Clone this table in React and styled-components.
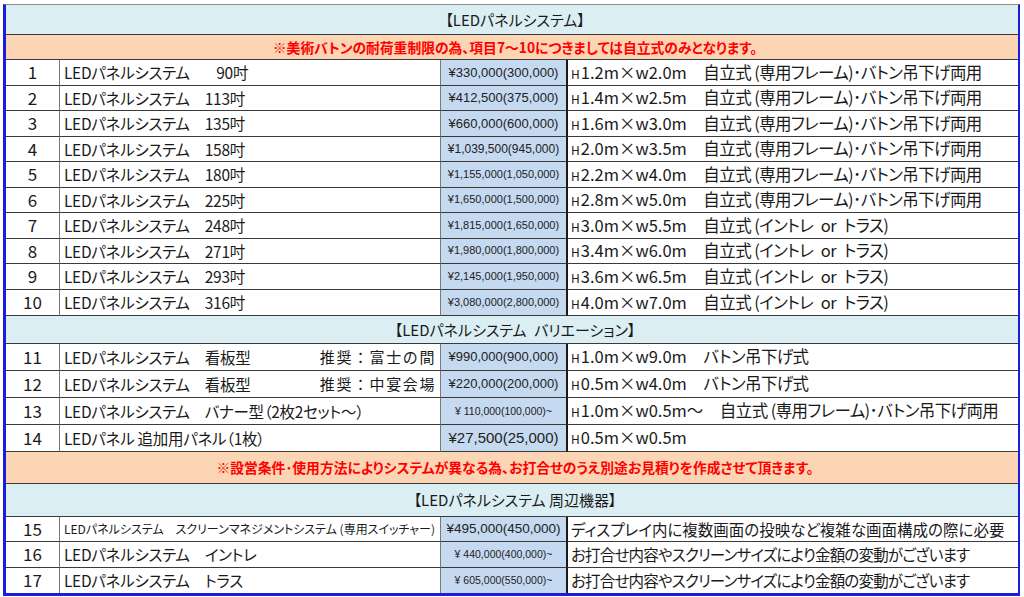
import styled, { createGlobalStyle } from "styled-components";

const GlobalStyle = createGlobalStyle`
  html, body {
    margin: 0;
    padding: 0;
    background: #ffffff;
  }
  body {
    font-family: "Noto Sans CJK JP", "Noto Sans", sans-serif;
    color: #1a1a1a;
  }
`;

const FRAME = "自立式 (専用フレーム)･バトン吊下げ両用";
const TOWER = "自立式 (イントレ\u2002or\u2002トラス)";
const GAP = "\u3000";

const systemRows = [
  { no: 1, rh: 26, size: "\u2007 90吋", price: "¥330,000(300,000)", ps: 13, h: "1.2m×w2.0m", note: FRAME },
  { no: 2, rh: 25, size: "113吋", price: "¥412,500(375,000)", ps: 13, h: "1.4m×w2.5m", note: FRAME },
  { no: 3, rh: 26, size: "135吋", price: "¥660,000(600,000)", ps: 13, h: "1.6m×w3.0m", note: FRAME },
  { no: 4, rh: 25, size: "158吋", price: "¥1,039,500(945,000)", ps: 12, h: "2.0m×w3.5m", note: FRAME },
  { no: 5, rh: 26, size: "180吋", price: "¥1,155,000(1,050,000)", ps: 11, h: "2.2m×w4.0m", note: FRAME },
  { no: 6, rh: 25, size: "225吋", price: "¥1,650,000(1,500,000)", ps: 11, h: "2.8m×w5.0m", note: FRAME },
  { no: 7, rh: 26, size: "248吋", price: "¥1,815,000(1,650,000)", ps: 11, h: "3.0m×w5.5m", note: TOWER },
  { no: 8, rh: 25, size: "271吋", price: "¥1,980,000(1,800,000)", ps: 11, h: "3.4m×w6.0m", note: TOWER },
  { no: 9, rh: 26, size: "293吋", price: "¥2,145,000(1,950,000)", ps: 11, h: "3.6m×w6.5m", note: TOWER },
  { no: 10, rh: 26, size: "316吋", price: "¥3,080,000(2,800,000)", ps: 11, h: "4.0m×w7.0m", note: TOWER },
];

const variationRows = [
  { no: 11, name: "LEDパネルシステム　看板型", tag: "推奨：富士の間", price: "¥990,000(900,000)", ps: 13, h: "1.0m×w9.0m", note: "バトン吊下げ式" },
  { no: 12, name: "LEDパネルシステム　看板型", tag: "推奨：中宴会場", price: "¥220,000(200,000)", ps: 13, h: "0.5m×w4.0m", note: "バトン吊下げ式" },
  { no: 13, name: "LEDパネルシステム　バナー型（2枚2セット～）", price: "¥ 110,000(100,000)~", ps: 10.5, h: "1.0m×w0.5m～", note: FRAME },
  { no: 14, name: "LEDパネル 追加用パネル（1枚）", price: "¥27,500(25,000)", ps: 15, h: "0.5m×w0.5m", note: "" },
];

const optionRows = [
  { no: 15, rh: 25, name: "LEDパネルシステム　スクリーンマネジメントシステム (専用スイッチャー)", small: true, price: "¥495,000(450,000)", ps: 13.5, text: "ディスプレイ内に複数画面の投映など複雑な画面構成の際に必要" },
  { no: 16, rh: 26, name: "LEDパネルシステム　イントレ", price: "¥ 440,000(400,000)~", ps: 10.5, tight: true, text: "お打合せ内容やスクリーンサイズにより金額の変動がございます" },
  { no: 17, rh: 25, name: "LEDパネルシステム　トラス", price: "¥ 605,000(550,000)~", ps: 10.5, tight: true, text: "お打合せ内容やスクリーンサイズにより金額の変動がございます" },
];

const App = () => {
  return (
    <>
      <GlobalStyle />
      <Frame>
        <Sheet>
          <colgroup>
            <col style={{ width: 54 }} />
            <col style={{ width: 381 }} />
            <col style={{ width: 127 }} />
            <col style={{ width: 450 }} />
          </colgroup>
          <tbody>
            <Row $h={30}>
              <Banner colSpan={4} $tone="blue">【LEDパネルシステム】</Banner>
            </Row>
            <Row $h={25}>
              <Banner colSpan={4} $tone="orange">
                ※美術バトンの耐荷重制限の為、項目7～10につきましては自立式のみとなります。
              </Banner>
            </Row>
            {systemRows.map((r) => (
              <Row key={r.no} $h={r.rh}>
                <NumCell>{r.no}</NumCell>
                <NameCell>{`LEDパネルシステム${GAP}${r.size}`}</NameCell>
                <PriceCell $size={r.ps}>{r.price}</PriceCell>
                <DescCell>
                  <HMark>H</HMark>
                  {r.h + GAP}
                  <Note>{r.note}</Note>
                </DescCell>
              </Row>
            ))}
            <Row $h={28}>
              <Banner colSpan={4} $tone="blue">{"【LEDパネルシステム\u2002バリエーション】"}</Banner>
            </Row>
            {variationRows.map((r) => (
              <Row key={r.no} $h={27}>
                <NumCell>{r.no}</NumCell>
                <NameCell>
                  <NameLine>
                    <span>{r.name}</span>
                    {r.tag && <Tag>{r.tag}</Tag>}
                  </NameLine>
                </NameCell>
                <PriceCell $size={r.ps}>{r.price}</PriceCell>
                <DescCell>
                  <HMark>H</HMark>
                  {r.note ? r.h + GAP : r.h}
                  {r.note && <Note>{r.note}</Note>}
                </DescCell>
              </Row>
            ))}
            <Row $h={32}>
              <Banner colSpan={4} $tone="orange">
                ※設営条件･使用方法によりシステムが異なる為、お打合せのうえ別途お見積りを作成させて頂きます。
              </Banner>
            </Row>
            <Row $h={33}>
              <Banner colSpan={4} $tone="blue">【LEDパネルシステム 周辺機器】</Banner>
            </Row>
            {optionRows.map((r, i) => (
              <Row key={r.no} $h={r.rh} $last={i === optionRows.length - 1}>
                <NumCell>{r.no}</NumCell>
                <NameCell $small={r.small}>{r.name}</NameCell>
                <PriceCell $size={r.ps}>{r.price}</PriceCell>
                <DescCell $plain $tight={r.tight}>{r.text}</DescCell>
              </Row>
            ))}
          </tbody>
        </Sheet>
      </Frame>
    </>
  );
};

export default App;

const Frame = styled.div`
  box-sizing: border-box;
  width: 1017px;
  margin: 4px 0 0 3px;
  border-top: 1px solid #8c8c8c;
  border-left: 3px solid #1c1cdc;
  border-right: 2px solid #1c1cdc;
  border-bottom: 3px solid #1c1cdc;
`;

const Sheet = styled.table`
  width: 1012px;
  table-layout: fixed;
  border-collapse: separate;
  border-spacing: 0;
`;

const Row = styled.tr`
  height: ${(p) => p.$h}px;

  & > td {
    height: ${(p) => p.$h}px;
    border-bottom: ${(p) => (p.$last ? "none" : "1px solid #3a3a3a")};
  }
`;

const Cell = styled.td`
  box-sizing: border-box;
  padding: 0;
  line-height: 1.2;
  vertical-align: middle;
  white-space: nowrap;
  overflow: hidden;
  font-feature-settings: "palt";
`;

const Banner = styled(Cell)`
  text-align: center;
  background: ${(p) => (p.$tone === "orange" ? "#fcd5b4" : "#daeef3")};
  color: ${(p) => (p.$tone === "orange" ? "#ff0000" : "#1a1a1a")};
  font-size: ${(p) => (p.$tone === "orange" ? "13.8px" : "15px")};
  font-weight: ${(p) => (p.$tone === "orange" ? 700 : 400)};
  padding-left: 6px;
`;

const NumCell = styled(Cell)`
  text-align: center;
  font-size: 17px;
  border-right: 1px solid #7a7a7a;
`;

const NameCell = styled(Cell)`
  padding-left: 4px;
  padding-right: 4px;
  font-size: ${(p) => (p.$small ? "12px" : "15.5px")};
  letter-spacing: ${(p) => (p.$small ? "0" : "-0.3px")};
  border-right: 1px solid #7a7a7a;
`;

const NameLine = styled.div`
  display: flex;
  justify-content: space-between;
`;

const Tag = styled.span`
  font-feature-settings: normal;
  letter-spacing: 1.6px;
  font-size: 15px;
`;

const PriceCell = styled(Cell)`
  text-align: center;
  background: #c5d9f1;
  font-family: "Liberation Sans", "Noto Sans CJK JP", sans-serif;
  font-size: ${(p) => p.$size}px;
  color: #222;
  border-right: 2px solid #1a1a1a;
`;

const DescCell = styled(Cell)`
  padding-left: 3px;
  font-size: ${(p) => (p.$plain ? "15.5px" : "16.5px")};
  letter-spacing: ${(p) => (p.$tight ? "-0.8px" : "0")};
`;

const Note = styled.span`
  letter-spacing: -0.6px;
`;

const HMark = styled.span`
  font-size: 12px;
  margin-right: 1px;
`;
